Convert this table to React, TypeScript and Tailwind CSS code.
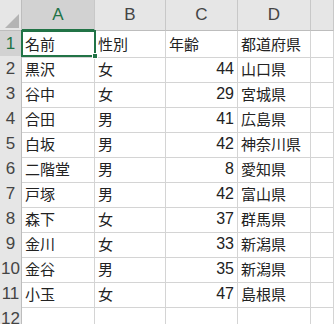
import React from "react";

const rows: [string, string, string, string][] = [
  ["名前", "性別", "年齢", "都道府県"],
  ["黒沢", "女", "44", "山口県"],
  ["谷中", "女", "29", "宮城県"],
  ["合田", "男", "41", "広島県"],
  ["白坂", "男", "42", "神奈川県"],
  ["二階堂", "男", "8", "愛知県"],
  ["戸塚", "男", "42", "富山県"],
  ["森下", "女", "37", "群馬県"],
  ["金川", "女", "33", "新潟県"],
  ["金谷", "男", "35", "新潟県"],
  ["小玉", "女", "47", "島根県"],
];

const jp = { fontFamily: '"Noto Sans CJK JP", "Noto Sans", sans-serif' };
const lat = { fontFamily: '"Liberation Sans", Arial, sans-serif' };

export default function App() {
  const cols = "grid-cols-[22px_73px_71px_72px_73px_23px]";
  return (
    <div className="relative w-[334px] h-[324px] overflow-hidden bg-white">
      {/* header */}
      <div className={`grid ${cols} h-[31px]`}>
        <div className="relative bg-[#e6e6e6] border-r border-b border-[#bdbdbd]">
          <svg className="absolute right-[2px] bottom-[2px]" width="14" height="14" viewBox="0 0 14 14">
            <polygon points="14,0 14,14 0,14" fill="#b4b4b4" />
          </svg>
        </div>
        {["A", "B", "C", "D", ""].map((h, i) => (
          <div
            key={i}
            className={`flex items-center justify-center text-[17px] border-r border-[#c8c8c8] ${
              i === 0
                ? "bg-[#d2d2d2] text-[#217346] border-b-2 border-b-[#217346]"
                : "bg-[#e6e6e6] text-[#444444] border-b border-b-[#bdbdbd]"
            }`}
            style={lat}
          >
            {h}
          </div>
        ))}
      </div>
      {/* rows */}
      {[...rows, null].map((r, ri) => (
        <div key={ri} className={`grid ${cols} h-[25px]`}>
          <div
            className={`flex items-center justify-center text-[17px] border-r border-b ${
              ri === 0
                ? "bg-[#d2d2d2] text-[#217346] border-r-[#217346] border-b-[#c8c8c8]"
                : "bg-[#e6e6e6] text-[#444444] border-r-[#bdbdbd] border-b-[#c8c8c8]"
            }`}
            style={lat}
          >
            {ri + 1}
          </div>
          {(r ?? ["", "", "", ""]).map((c, ci) => (
            <div
              key={ci}
              className={`flex items-center border-r border-b border-[#d4d4d4] text-[15px] text-[#222222] px-[3px] overflow-hidden whitespace-nowrap ${
                ci === 2 && ri > 0 ? "justify-end" : "justify-start"
              }`}
              style={ci === 2 && ri > 0 ? lat : jp}
            >
              <span className={ci === 2 && ri > 0 ? "text-[16px]" : ""}>{c}</span>
            </div>
          ))}
          <div className="border-r border-b border-[#d4d4d4]" />
        </div>
      ))}
      {/* selection */}
      <div className="absolute left-[21px] top-[30px] w-[75px] h-[27px] border-2 border-[#217346] pointer-events-none" />
      <div className="absolute left-[92px] top-[53px] w-[6px] h-[6px] bg-[#217346] border border-white" />
    </div>
  );
}
